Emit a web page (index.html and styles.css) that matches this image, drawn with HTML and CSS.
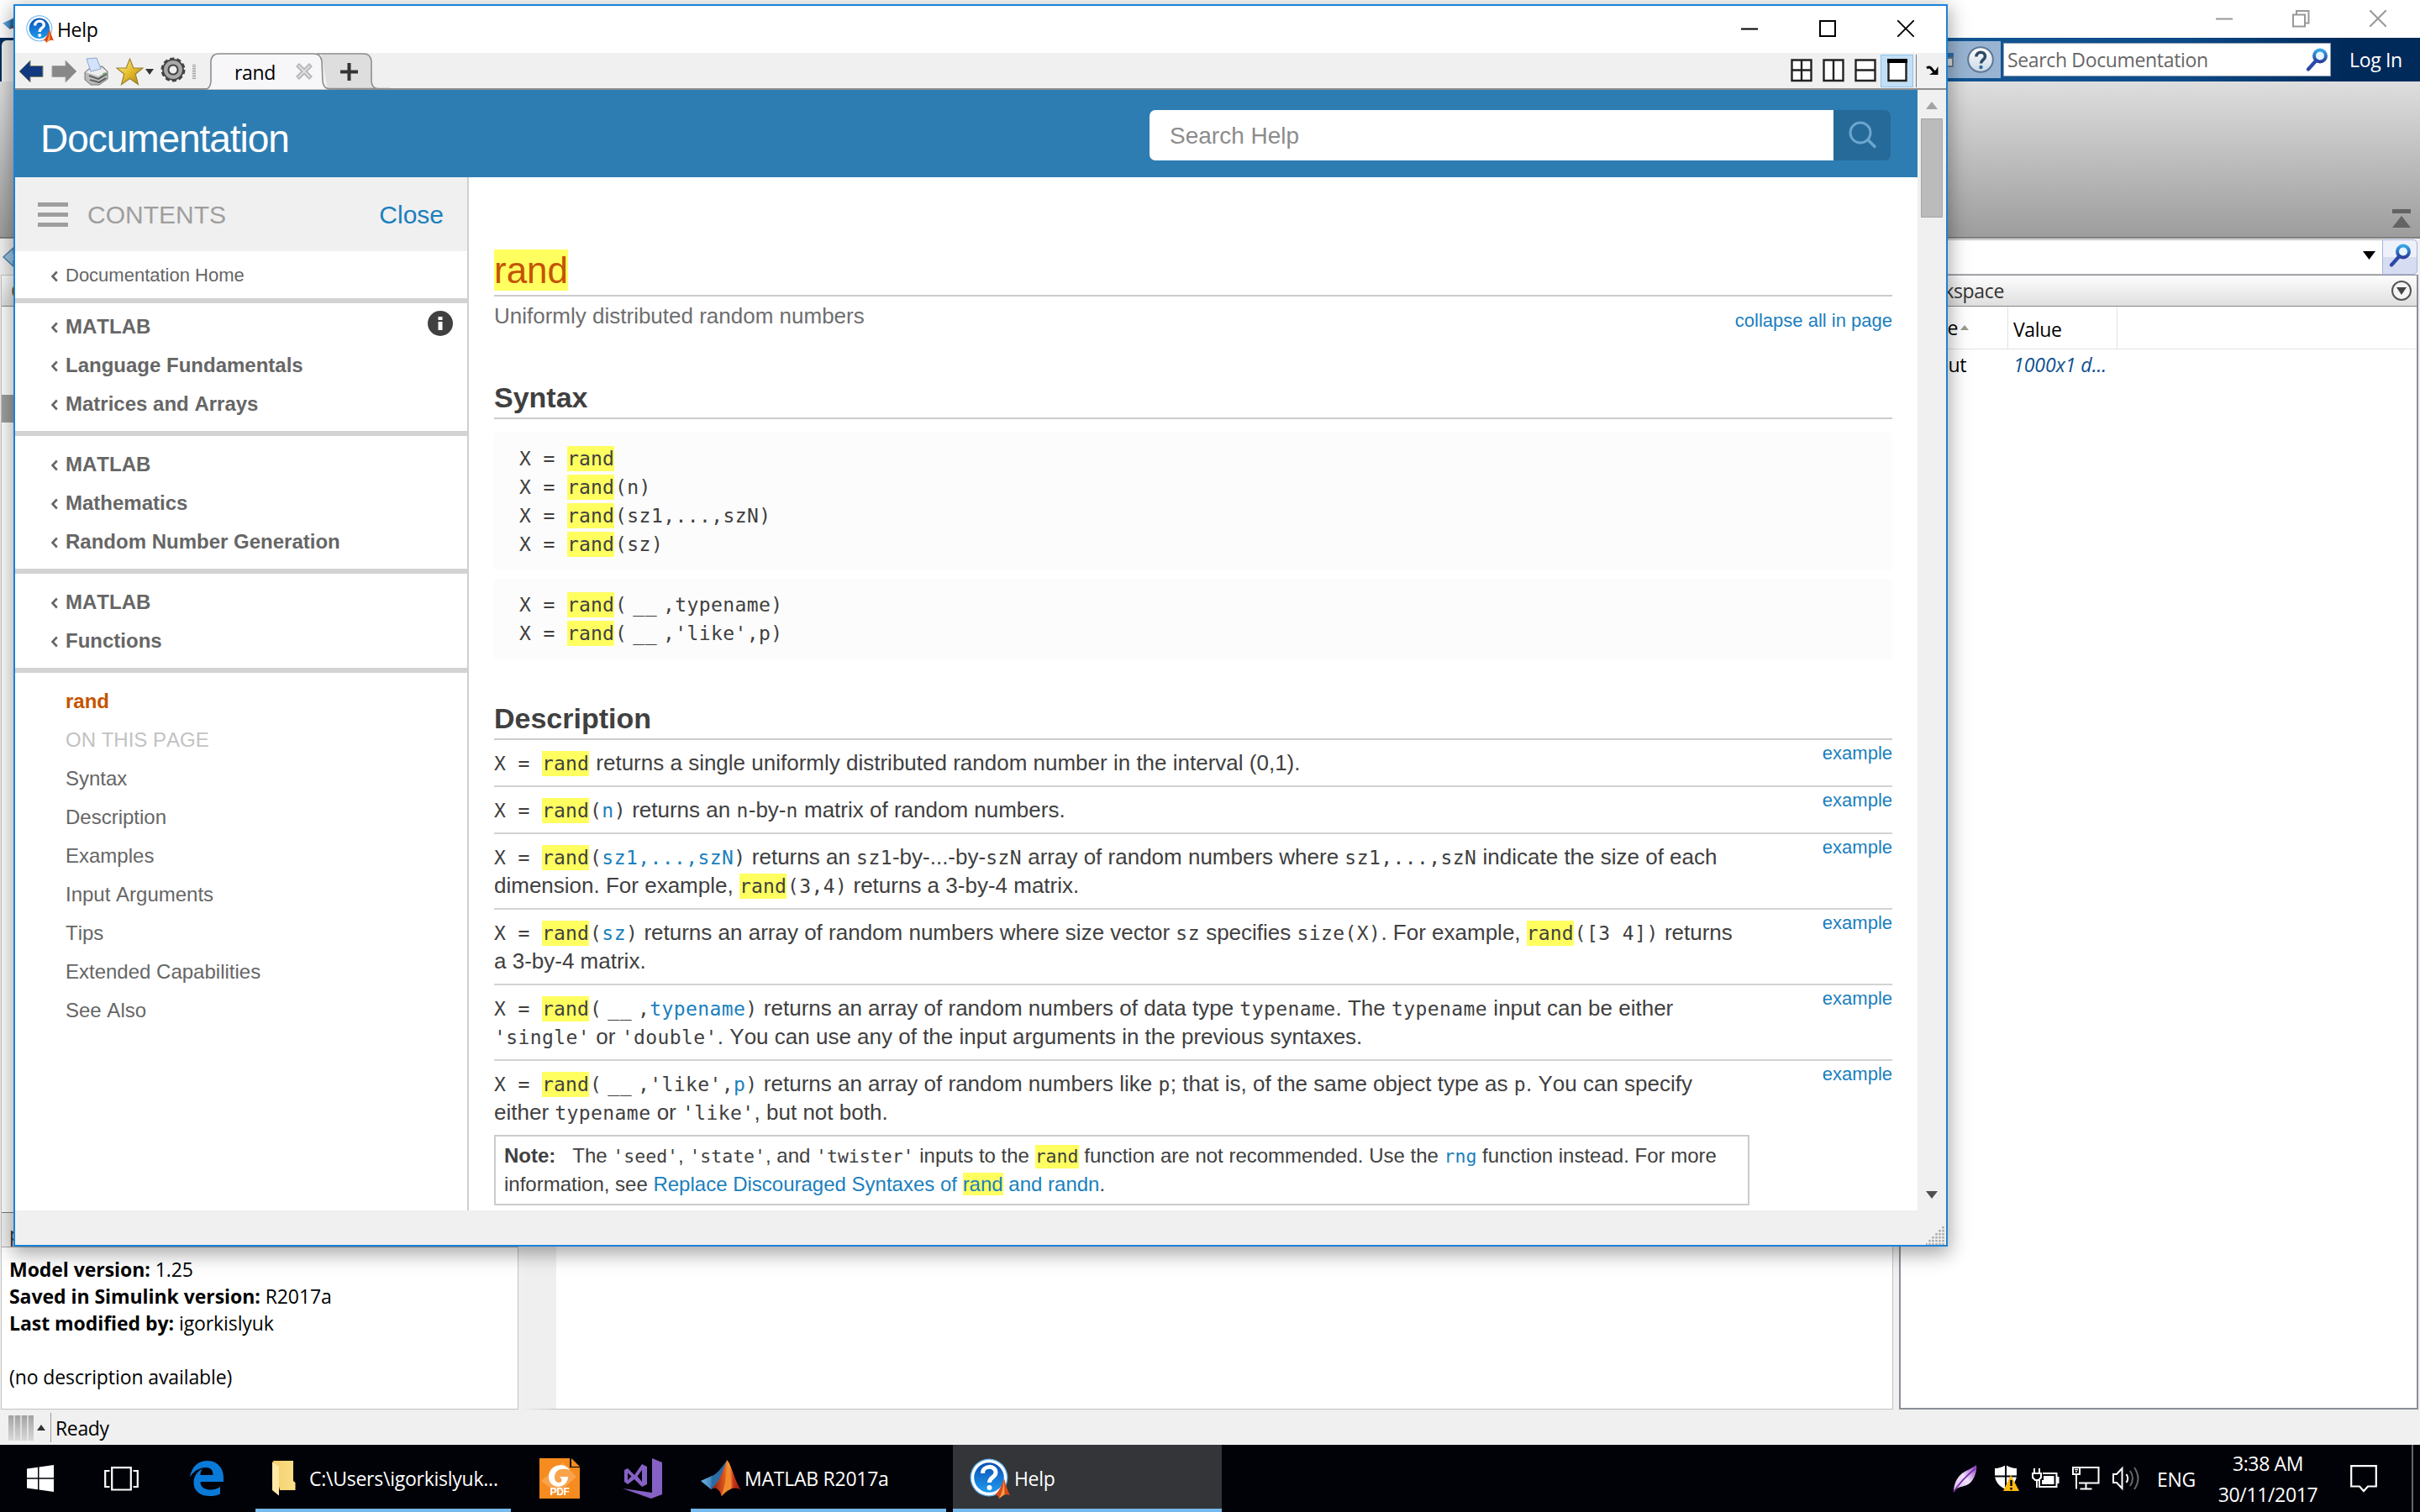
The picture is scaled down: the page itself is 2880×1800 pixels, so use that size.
FILE: index.html
```html
<!DOCTYPE html>
<html lang="en">
<head>
<meta charset="utf-8">
<title>Help</title>
<link rel="stylesheet" href="styles.css">
</head>
<body>
<svg class="defs" aria-hidden="true">
  <defs>
    <linearGradient id="gBlue" x1="0" y1="0" x2="0" y2="1"><stop offset="0" stop-color="#0a50b4"/><stop offset="1" stop-color="#1f9bf0"/></linearGradient>
    <linearGradient id="gPeak" x1="0" y1="0" x2="1" y2="0"><stop offset="0" stop-color="#7a1410"/><stop offset=".45" stop-color="#e2571e"/><stop offset=".6" stop-color="#f9a13a"/><stop offset=".75" stop-color="#c8321a"/><stop offset="1" stop-color="#8f1a12"/></linearGradient>
    <linearGradient id="gWing" x1="0" y1="0" x2="1" y2="0"><stop offset="0" stop-color="#6fb7e8"/><stop offset="1" stop-color="#1f5f98"/></linearGradient>
    <linearGradient id="gGlass" x1="0" y1="0" x2="0" y2="1"><stop offset="0" stop-color="#35a6e6"/><stop offset="1" stop-color="#2a3f9c"/></linearGradient>
    <linearGradient id="gStar" x1="0" y1="0" x2="1" y2="1"><stop offset="0" stop-color="#fff3a0"/><stop offset=".5" stop-color="#e8be2e"/><stop offset="1" stop-color="#a87a10"/></linearGradient>
    <linearGradient id="gFolder" x1="0" y1="0" x2="1" y2="0"><stop offset="0" stop-color="#f5cf6a"/><stop offset="1" stop-color="#fbdf8a"/></linearGradient>
    <linearGradient id="gFeather" x1="0" y1="1" x2="1" y2="0"><stop offset="0" stop-color="#d9b8ee"/><stop offset=".5" stop-color="#f0e2fa"/><stop offset="1" stop-color="#8a35c0"/></linearGradient>
    <linearGradient id="gBall" x1="0" y1="0" x2="0" y2="1"><stop offset="0" stop-color="#fff"/><stop offset="1" stop-color="#c9d8e6"/></linearGradient>
    <symbol id="matlab" viewBox="0 0 48 44">
      <path d="M0 25 L13 19 L22 29 L12 35 Z" fill="url(#gWing)"/>
      <path d="M13 19 C20 17 25 8 31 1 L28 22 L22 31 L12 35 Z" fill="#2b6ca5"/>
      <path d="M31 0 C36 4 40 24 48 36 C40 31 34 34 25 43 C22 35 19 32 12 34 C21 30 27 12 31 0 Z" fill="url(#gPeak)"/>
      <path d="M31 2 C35 12 37 26 36 34 C31 36 28 40 24 43 C30 30 31 16 31 2 Z" fill="#f28b2c"/>
    </symbol>
    <symbol id="helpball" viewBox="0 0 48 48">
      <circle cx="23" cy="23" r="22.5" fill="#5fb0ea"/>
      <circle cx="23" cy="23" r="21.2" fill="#fff"/>
      <circle cx="23" cy="23" r="17.8" fill="url(#gBlue)"/>
      <path d="M15.500 18 C15.500 8 31 8 31 17 C31 23 23.500 22 23.500 29" fill="none" stroke="#fff" stroke-width="5"/>
      <circle cx="23.500" cy="35" r="3" fill="#fff"/>
      <path d="M41 24 C43 32 45 38 48 44 C43 42 39 44 35 48 C34 44 32 44 30 43 C35 40 38 32 41 24 Z" fill="#d8481c"/>
      <path d="M41 25 L41.500 43 L35 48 C39 40 40 34 41 25 Z" fill="#f5a040"/>
    </symbol>
    <symbol id="glass" viewBox="0 0 26 28">
      <circle cx="17" cy="9.500" r="7" fill="#e6f4ff" stroke="url(#gGlass)" stroke-width="4"/>
      <path d="M12 15.500 L3 25.500" stroke="#2c49a8" stroke-width="4.200" stroke-linecap="round"/>
    </symbol>
    <symbol id="caret" viewBox="0 0 10 14"><path d="M7.800 1.500 L2.500 7 L7.800 12.500" fill="none" stroke="currentColor" stroke-width="2.600"/></symbol>
  </defs>
</svg>

<div class="desktop">
  <div class="matlab">
    <div class="m-title">
      <svg class="m-logo" width="34" height="31"><use href="#matlab"/></svg>
      <div class="m-controls">
        <svg width="20" height="20"><path d="M0 10.500H20" stroke="#999" stroke-width="2"/></svg>
        <svg width="21" height="21"><path d="M1 5.500H15V19.500H1Z M5 5V1H19.500V15.500H15.500" fill="none" stroke="#999" stroke-width="2"/></svg>
        <svg width="20" height="20"><path d="M0 0L20 20M20 0L0 20" stroke="#999" stroke-width="2"/></svg>
      </div>
    </div>
    <div class="m-band">
      <div class="m-tabedge"></div>
      <div class="m-quick"><svg width="7" height="17" viewBox="0 0 7 17"><path d="M0 0H7V17H0Z" fill="#6b7c8c"/><path d="M0 0H7V5H0Z" fill="#2f6fae"/><path d="M0 7H5V15H0Z" fill="#ddd"/></svg><svg width="32" height="34" viewBox="0 0 32 34"><circle cx="16" cy="17" r="14.800" fill="url(#gBall)" stroke="#5d7896" stroke-width="2"/><path d="M11 13.500C11 6.500 21.500 6.500 21.500 13C21.500 17.500 16.500 17 16.500 21.500" fill="none" stroke="#2f4a68" stroke-width="3.600"/><circle cx="16.500" cy="26" r="2.200" fill="#2f6a9a"/></svg></div>
      <div class="m-search"><span>Search Documentation</span><svg width="26" height="28"><use href="#glass"/></svg></div>
      <span class="m-login">Log In</span>
    </div>
    <div class="m-ribbon"><svg width="22" height="24"><path d="M0 0H22V5H0ZM11 8L22 22H0Z" fill="#636363"/></svg></div>
    <div class="m-address">
      <svg class="m-back" width="24" height="24"><path d="M1 12L13 1V7H24V17H13V23Z" fill="#9cc4e0" stroke="#4e7fa5" stroke-width="1.500"/></svg>
      <div class="m-path"><svg width="15" height="10"><path d="M0 0H15L7.500 10Z" fill="#000"/></svg></div>
      <div class="m-go"><svg width="26" height="28"><use href="#glass"/></svg></div>
    </div>
    <div class="m-body">
      <div class="m-left">
        <div class="m-head m-cur">C</div>
        <div class="m-files"><div class="m-thumb"></div></div>
        <div class="m-head m-pos">p</div>
        <div class="m-details">
          <div><b>Model version:</b> 1.25</div>
          <div><b>Saved in Simulink version:</b> R2017a</div>
          <div><b>Last modified by:</b> igorkislyuk</div>
          <div>&nbsp;</div>
          <div>(no description available)</div>
        </div>
      </div>
      <div class="m-center"></div>
      <div class="m-right">
        <div class="m-head m-ws"><span>kspace</span><svg width="26" height="26" viewBox="0 0 26 26"><circle cx="13" cy="13" r="11" fill="#f4f4f4" stroke="#555" stroke-width="2"/><path d="M7 9H19L13 18Z" fill="#444"/></svg></div>
        <div class="m-cols"><span class="c1">Name<svg width="10" height="6"><path d="M0 6L5 0L10 6Z" fill="#999a8c"/></svg></span><span class="c2">Value</span><span class="c3"></span></div>
        <div class="m-row"><span class="c1">out</span><span class="c2">1000x1 d...</span></div>
      </div>
    </div>
    <div class="m-status"><div class="m-stripes"></div><svg width="10" height="7"><path d="M0 7L5 0L10 7Z" fill="#333"/></svg><div class="m-sep"></div><span>Ready</span></div>
  </div>

  <div class="help">
    <div class="h-title">
      <svg width="33" height="33"><use href="#helpball"/></svg><span>Help</span>
      <div class="h-controls">
        <svg width="20" height="20"><path d="M0 10.500H20" stroke="#000" stroke-width="2"/></svg>
        <svg width="20" height="20"><path d="M1 1H19V19H1Z" fill="none" stroke="#000" stroke-width="2"/></svg>
        <svg width="20" height="20"><path d="M0 0L20 20M20 0L0 20" stroke="#000" stroke-width="1.800"/></svg>
      </div>
    </div>
    <div class="h-tools">
      <svg class="ic-back" width="31" height="28" viewBox="0 0 31 28"><path d="M1 14L14 1V7.500H29V20.500H14V27Z" fill="#12397f" stroke="#8b8a6a" stroke-width="1"/></svg>
      <svg class="ic-fwd" width="31" height="28" viewBox="0 0 31 28"><path d="M30 14L17 1V7.500H1V20.500H17V27Z" fill="#888" stroke="#a5a5a5" stroke-width="1"/></svg>
      <svg class="ic-print" width="30" height="34" viewBox="0 0 30 34"><path d="M1 18L8 12L22 11L28 17V26L18 33H8L1 27Z" fill="#b9b9b9" stroke="#777"/><path d="M2 18L9 13.500L21 12.500L27 17L17 23Z" fill="#ededed"/><path d="M3 2L15 1L20 14L8 17Z" fill="#d3e2fb" stroke="#8ea6cc"/><path d="M6 22L17 26L27 20M7 27L18 30L26 25" stroke="#555" stroke-width="1.800" fill="none"/><circle cx="24" cy="20" r="1.500" fill="#4eb848"/></svg>
      <svg class="ic-star" width="33" height="33" viewBox="0 0 33 33"><path d="M16.500 1L20.800 12H32L23.200 19.200L26.500 31.500L16.500 24.500L6.500 31.500L9.800 19.200L1 12H12.200Z" fill="url(#gStar)" stroke="#9a8433" stroke-width="1.200"/></svg>
      <svg class="ic-drop" width="10" height="7"><path d="M0 0H10L5 7Z" fill="#333"/></svg>
      <svg class="ic-gear" width="30" height="30" viewBox="0 0 30 30"><circle cx="15" cy="15" r="12.500" fill="none" stroke="#444" stroke-width="4" stroke-dasharray="4.900 2.950"/><circle cx="15" cy="15" r="8.700" fill="none" stroke="#444" stroke-width="8.400"/><circle cx="15" cy="15" r="8.800" fill="none" stroke="#a9a9a9" stroke-width="4.400"/></svg>
      <div class="ic-grip"></div>
      <div class="tabs">
        <svg class="tabshape" width="220" height="44" viewBox="0 0 220 44"><path d="M138 1H189Q196 1 197 10L198 34Q199 43 206 43H146Z" fill="#dedede"/><path d="M0 43.500Q6 43 7 34V10Q8 1 16 1H129Q138 1 139 10L140 34Q141 43.500 148 43.500Z" fill="#f7f7fa"/><path d="M0 43.500Q6 43 7 34V10Q8 1 16 1H129Q138 1 139 10L140 34Q141 42.500 148 42.500H220M133 1H189Q197 1 198 10V34Q199 42.500 206 42.500" fill="none" stroke="#8e8e8e" stroke-width="1.600"/></svg>
        <span class="tabname">rand</span>
        <svg class="tabx" width="20" height="20"><path d="M2 2L18 18M18 2L2 18" stroke="#b5b5b5" stroke-width="5.500"/><path d="M3 3L17 17M17 3L3 17" stroke="#dedede" stroke-width="2"/></svg>
        <svg class="plus" width="21" height="21"><path d="M10.500 0V21M0 10.500H21" stroke="#333" stroke-width="4"/></svg>
      </div>
      <div class="layouts">
        <svg width="26" height="28"><path d="M1.500 1.500H24.500V26H1.500ZM13 2V26M2 13.500H24" fill="#fff" stroke="#222" stroke-width="2.400"/></svg>
        <svg width="26" height="28"><path d="M1.500 1.500H24.500V26H1.500ZM13 2V26" fill="#fff" stroke="#222" stroke-width="2.400"/></svg>
        <svg width="26" height="28"><path d="M1.500 1.500H24.500V26H1.500ZM2 13.500H24" fill="#fff" stroke="#222" stroke-width="2.400"/></svg>
        <div class="sel"><svg width="24" height="28"><path d="M1.500 1.500H22.500V26H1.500Z" fill="#fff" stroke="#222" stroke-width="2.400"/><path d="M0 0H24V5H0Z" fill="#000"/></svg></div>
        <div class="vline"></div>
        <svg class="dock" width="15" height="12"><path d="M1 3Q4 1 6 3L10 8" stroke="#000" stroke-width="3" fill="none"/><path d="M14.500 1V11H4L7 9L12 5Z" fill="#000"/></svg>
      </div>
    </div>

    <div class="h-body">
      <div class="page">
        <div class="dochead">
          <h1>Documentation</h1>
          <div class="searchbox"><span>Search Help</span></div>
          <div class="searchbtn"><svg width="34" height="34" viewBox="0 0 34 34"><circle cx="14" cy="14" r="12" fill="none" stroke="#6ba6cf" stroke-width="3"/><path d="M23 22.500L32 31.500" stroke="#6ba6cf" stroke-width="3.500"/></svg></div>
        </div>
        <div class="cols">
          <nav class="side">
            <div class="contents"><div class="burger"></div><span>CONTENTS</span><a>Close</a></div>
            <div class="sec home"><div class="crumb"><svg width="10" height="14"><use href="#caret"/></svg>Documentation Home</div></div>
            <div class="sec first">
              <svg class="info" width="30" height="30"><circle cx="15" cy="15" r="15" fill="#404040"/><path d="M12.500 7H17.500V11H12.500ZM12.500 13H17.500V23H12.500Z" fill="#fff"/></svg>
              <div class="crumb"><svg width="10" height="14"><use href="#caret"/></svg>MATLAB</div>
              <div class="crumb"><svg width="10" height="14"><use href="#caret"/></svg>Language Fundamentals</div>
              <div class="crumb"><svg width="10" height="14"><use href="#caret"/></svg>Matrices and Arrays</div>
            </div>
            <div class="sec">
              <div class="crumb"><svg width="10" height="14"><use href="#caret"/></svg>MATLAB</div>
              <div class="crumb"><svg width="10" height="14"><use href="#caret"/></svg>Mathematics</div>
              <div class="crumb"><svg width="10" height="14"><use href="#caret"/></svg>Random Number Generation</div>
            </div>
            <div class="sec">
              <div class="crumb"><svg width="10" height="14"><use href="#caret"/></svg>MATLAB</div>
              <div class="crumb"><svg width="10" height="14"><use href="#caret"/></svg>Functions</div>
            </div>
            <div class="toc">
              <div class="cur">rand</div>
              <div class="lbl">ON THIS PAGE</div>
              <div>Syntax</div><div>Description</div><div>Examples</div><div>Input Arguments</div><div>Tips</div><div>Extended Capabilities</div><div>See Also</div>
            </div>
          </nav>
          <main class="main">
            <h2 class="fn"><mark>rand</mark></h2>
            <div class="purpose"><span>Uniformly distributed random numbers</span><a>collapse all in page</a></div>
            <h3>Syntax</h3>
            <div class="code">
              <div>X = <mark>rand</mark></div>
              <div>X = <mark>rand</mark>(n)</div>
              <div>X = <mark>rand</mark>(sz1,...,szN)</div>
              <div>X = <mark>rand</mark>(sz)</div>
            </div>
            <div class="code two">
              <div>X = <mark>rand</mark>(<i>__</i>,typename)</div>
              <div>X = <mark>rand</mark>(<i>__</i>,'like',p)</div>
            </div>
            <h3 class="desc">Description</h3>
            <div class="item"><p><code>X = <mark>rand</mark></code> returns a single uniformly distributed random number in the interval (0,1).</p><a>example</a></div>
            <div class="item"><p><code>X = <mark>rand</mark>(<b>n</b>)</code> returns an <code>n</code>-by-<code>n</code> matrix of random numbers.</p><a>example</a></div>
            <div class="item"><p><code>X = <mark>rand</mark>(<b>sz1,...,szN</b>)</code> returns an <code>sz1</code>-by-...-by-<code>szN</code> array of random numbers where <code>sz1,...,szN</code> indicate the size of each<br>dimension. For example, <code><mark>rand</mark>(3,4)</code> returns a 3-by-4 matrix.</p><a>example</a></div>
            <div class="item"><p><code>X = <mark>rand</mark>(<b>sz</b>)</code> returns an array of random numbers where size vector <code>sz</code> specifies <code>size(X)</code>. For example, <code><mark>rand</mark>([3 4])</code> returns<br>a 3-by-4 matrix.</p><a>example</a></div>
            <div class="item"><p><code>X = <mark>rand</mark>(<i>__</i>,<b>typename</b>)</code> returns an array of random numbers of data type <code>typename</code>. The <code>typename</code> input can be either<br><code>'single'</code> or <code>'double'</code>. You can use any of the input arguments in the previous syntaxes.</p><a>example</a></div>
            <div class="item last"><p><code>X = <mark>rand</mark>(<i>__</i>,'like',<b>p</b>)</code> returns an array of random numbers like <code>p</code>; that is, of the same object type as <code>p</code>. You can specify<br>either <code>typename</code> or <code>'like'</code>, but not both.</p><a>example</a></div>
            <div class="note"><strong>Note:</strong>The <code>'seed'</code>, <code>'state'</code>, and <code>'twister'</code> inputs to the <code><mark>rand</mark></code> function are not recommended. Use the <code><b>rng</b></code> function instead. For more<br>information, see <a>Replace Discouraged Syntaxes of <mark>rand</mark> and randn</a>.</div>
          </main>
        </div>
      </div>
      <div class="scroll">
        <svg width="14" height="9"><path d="M0 9L7 0L14 9Z" fill="#a3a3a3"/></svg>
        <div class="thumb"></div>
        <svg class="down" width="14" height="9"><path d="M0 0H14L7 9Z" fill="#505050"/></svg>
      </div>
    </div>
    <div class="h-foot"><svg width="24" height="24" viewBox="0 0 24 24"><path d="M20.500 2v22M16.500 6v18M12.500 10v14M8.500 14v10M4.500 18v6M.5 22v2" stroke="#aaa" stroke-width="2.400" stroke-dasharray="2.400 1.600"/></svg></div>
  </div>

  <div class="taskbar">
    <div class="tb start"><svg width="32" height="32" viewBox="0 0 32 32"><path d="M0 4.500L13 2.800V15.300H0ZM14.500 2.500L32 0V15.300H14.500ZM0 16.700H13V29.200L0 27.500ZM14.500 16.700H32V32L14.500 29.500Z" fill="#fff"/></svg></div>
    <div class="tb view"><svg width="41" height="29" viewBox="0 0 41 29"><path d="M9.200 1.200H31.800V27.500H9.200ZM6.500 5H1.200V24H6.500M34.500 5H39.800V24H34.500" fill="none" stroke="#fff" stroke-width="2.200"/></svg></div>
    <div class="tb edge"><svg width="40" height="42" viewBox="0 0 40 42"><path d="M0 19.500C2 7 10 0 21 0C33 0 40 9 40 20V25H12.500C12.500 32 18 34.500 25 34.500C29.500 34.500 33 33 36 31V39.500C32 41.500 28 42 23.500 42C11 42 4.500 35 4.500 26C4.500 18 9 12.500 15 9.500C13 12 12.500 14.500 12.300 17H27.500C27.500 11 24.500 8 19 8C11 8 4 13 0 19.500Z" fill="#0a7ad8"/></svg></div>
    <div class="tb folder"><svg width="28" height="42" viewBox="0 0 28 42"><path d="M1 0H25V24L27.500 26V35H9Z" fill="url(#gFolder)"/><path d="M0 1L8 7V41.500L0 35Z" fill="#ffe9a6"/></svg><span>C:\Users\igorkislyuk...</span></div>
    <div class="tb pdf"><svg width="48" height="48" viewBox="0 0 48 48"><path d="M0 0H36V11H48V48H0Z" fill="#f68b1f"/><path d="M38 0L48 10H38Z" fill="#f68b1f"/><path d="M2 27L28 5L44 22L22 42Z" fill="#f9a34c"/><path d="M36 14C30 4 11 7 11 22C11 38 34 37 34 22H24C27 24 28 29 23 29C16 29 16 14 26 13C30 12.500 33 13 36 14Z" fill="#fff"/><text x="24" y="44" text-anchor="middle" class="pdftext">PDF</text></svg></div>
    <div class="tb vs"><svg width="47" height="48" viewBox="0 0 47 48"><path d="M35 0L47 5V43L34 48L0 36L35 41Z" fill="#8661c5"/><path d="M2 14L6 12L14 20L23 7L29 10V31L23 34L14 25L6 31L2 28ZM6 17.500V26L10.500 21.500ZM23 14L17.500 21.500L23 28Z" fill="#8661c5" fill-rule="evenodd"/></svg></div>
    <div class="tb mat"><svg width="48" height="46"><use href="#matlab"/></svg><span>MATLAB R2017a</span></div>
    <div class="tb hlp"><svg width="48" height="48"><use href="#helpball"/></svg><span>Help</span></div>
    <div class="tray">
      <svg class="y1" width="30" height="34" viewBox="0 0 30 34"><path d="M1 31C2 22 5 16 11 11C16 7 22 6 28 1C29 8 26 17 21 22C16 27 10 26 5 29Z" fill="url(#gFeather)"/><path d="M1 33C8 22 16 14 27 5" stroke="#7a2fb0" stroke-width="1.800" fill="none"/></svg>
      <svg class="y2" width="31" height="32" viewBox="0 0 31 32"><path d="M1 4C6 4 11 2 14 0C17 2 22 4 27 4V12C27 20 21 26 14 29C7 26 1 20 1 12Z" fill="#fff"/><path d="M14 0V29M0 13.500H28" stroke="#000208" stroke-width="2"/><path d="M20 12L30 31H11Z" fill="#fdb913"/><path d="M20.500 18V25M20.500 27V29.500" stroke="#000" stroke-width="2.400"/></svg>
      <svg class="y3" width="33" height="24" viewBox="0 0 33 24"><path d="M3 0V6M9 0V6M1 6H11V11L8 14H4L1 11ZM6 14V23" stroke="#fff" stroke-width="2" fill="none"/><path d="M13 6H29.500V22H9V14" fill="none" stroke="#fff" stroke-width="2"/><path d="M14 9H26.500V19H12V14H14ZM30 10H32.500V18H30Z" fill="#fff"/></svg>
      <svg class="y4" width="33" height="28" viewBox="0 0 33 28"><path d="M9 1H31.500V19.500H8M1 1H9V9H1ZM5 9V26.500M16.500 20V26M9.500 26.500H23.500" stroke="#fff" stroke-width="2" fill="none"/><path d="M3 3.500h4M5 5v2" stroke="#fff" stroke-width="1.500"/></svg>
      <svg class="y5" width="33" height="30" viewBox="0 0 33 30"><path d="M1 10H5L11.500 3V27L5 20H1Z" fill="none" stroke="#fff" stroke-width="2"/><path d="M16.500 10Q20 15 16.500 20" fill="none" stroke="#fff" stroke-width="2"/><path d="M21 6Q27 15 21 24M26 2Q35 15 26 28" fill="none" stroke="#666" stroke-width="2"/></svg>
      <span class="eng">ENG</span>
      <div class="clock"><div>3:38 AM</div><div>30/11/2017</div></div>
      <svg class="note-ic" width="32" height="33" viewBox="0 0 32 33"><path d="M1.200 1.200H30.800V25.500H21L16 31L11 25.500H1.200Z" fill="none" stroke="#fff" stroke-width="2.200"/></svg>
      <div class="peek"></div>
    </div>
  </div>
</div>
</body>
</html>
```
FILE: styles.css
```css
* { box-sizing: border-box; }
body { margin: 0; background: #f0f0f0; }
svg { display: block; flex: none; }
.defs { position: absolute; width: 0; height: 0; }
h1, h2, h3, p { margin: 0; font-weight: normal; }
.desktop { position: relative; width: 2880px; height: 1800px; overflow: hidden; display: flex; flex-direction: column;
  font-family: "Open Sans", "Noto Sans", sans-serif; font-size: 23px; letter-spacing: -0.35px; white-space: nowrap; font-kerning: none; color: #000; }

/* Main MATLAB window behind */
.matlab { height: 1720px; display: flex; flex-direction: column; background: #f0f0f0; }
.m-title { height: 45px; flex: none; background: #fff; display: flex; justify-content: space-between; padding: 10px 40px 0 3px; }
.m-controls { display: flex; gap: 71px; align-items: center; height: 24px; }
.m-band { height: 52px; flex: none; display: flex; align-items: center; background: linear-gradient(90deg, #00305e 0, #00305e 2200px, #135695 2320px, #0c4a88 2600px, #002a5a 2790px); }
.m-tabedge { width: 2316px; margin-left: 2px; height: 49px; margin-top: 3px; background: #ececec; border-radius: 6px 0 0 0; flex: none; }
.m-quick { width: 63px; height: 44px; margin-right: 3px; background: #98b4d2; display: flex; align-items: center; justify-content: space-between; padding-right: 8px; }
.m-search { width: 390px; height: 40px; background: #fff; border: 1px solid #8e9bab; display: flex; align-items: center; justify-content: space-between; padding: 0 3px 0 4px; color: #666; line-height: 40px; }
.m-login { color: #fff; margin-left: 22px; }
.m-ribbon { height: 187px; flex: none; background: linear-gradient(#dedede, #9d9d9d); border-bottom: 2px solid #808080; display: flex; justify-content: flex-end; align-items: flex-end; padding: 0 11px 9px 0; }
.m-address { height: 43px; flex: none; display: flex; align-items: center; background: #f0f0f0; }
.m-back { margin: 0 0 0 3px; }
.m-path { flex: 1; height: 42px; margin-left: 10px; background: #fff; border: 1px solid #b5b5b5; border-right: 0; display: flex; justify-content: flex-end; align-items: center; padding: 0 8px 3px 0; }
.m-go { width: 42px; height: 42px; margin-right: 3px; border: 1px solid #a9b3d8; border-radius: 0 5px 5px 0; background: linear-gradient(#eef0fa 50%, #d6dcf2 50%); display: flex; align-items: center; justify-content: center; padding-bottom: 3px; }
.m-body { flex: 1; min-height: 0; display: flex; padding: 0 2px 0 1px; }
.m-left { width: 616px; display: flex; flex-direction: column; border: 1px solid #c3c3c3; background: #fff; }
.m-head { height: 37px; flex: none; border-bottom: 1px solid #888; background: linear-gradient(#fdfdfd, #dfdfdf); line-height: 36px; color: #333; }
.m-cur { padding-left: 11px; color: #7a4410; }
.m-files { flex: 1; padding-top: 105px; }
.m-thumb { width: 20px; height: 33px; background: #9f9f9f; }
.m-pos { height: 42px; border-top: 1px solid #777; border-bottom: 1px solid #aaa; padding-left: 9px; background: #f0f0f0; line-height: 50px; }
.m-details { height: 192px; flex: none; padding: 10px 0 0 9px; line-height: 32px; letter-spacing: -0.1px; }
.m-details b { font-weight: 700; letter-spacing: -0.05px; }
.m-center { width: 1630px; margin-left: 6px; background: #fff; border: 1px solid #c3c3c3; border-left: 39px solid #efefef; }
.m-right { flex: 1; margin-left: 7px; border: 1px solid #8a8f98; border-width: 1px 2px 2px; background: #fff; }
.m-ws { display: flex; justify-content: space-between; align-items: center; padding: 0 5px 0 8px; }
.m-ws span { width: 115px; display: flex; justify-content: flex-end; }
.m-cols { height: 51px; display: flex; border-bottom: 1px solid #e2e2e2; line-height: 54px; }
.c1 { width: 128px; display: flex; justify-content: flex-end; align-items: center; border-right: 1px solid #e2e2e2; }
.m-cols .c1 svg { margin-left: 3px; }
.c2 { width: 130px; padding-left: 6px; border-right: 1px solid #e2e2e2; }
.m-row { display: flex; line-height: 36px; }
.m-row .c1, .m-row .c2 { border: 0; }
.m-cols .c1 { padding-right: 46px; }
.m-row .c1 { padding-right: 50px; }
.m-row .c2 { font-style: italic; color: #0d4f8f; letter-spacing: 0; }
.m-status { height: 42px; flex: none; display: flex; align-items: center; padding-left: 10px; border-top: 1px solid #ededed; }
.m-status span { padding-top: 1px; }
.m-stripes { width: 30px; height: 30px; margin-right: 4px; background: linear-gradient(rgba(240,240,240,0), rgba(240,240,240,.7)), repeating-linear-gradient(90deg, #a2a2a2 0 6px, #d6d6d6 6px 8px); }
.m-sep { width: 1px; height: 35px; background: #999; margin: 0 5px 0 6px; }

/* Help window */
.help { position: absolute; left: 16px; top: 5px; width: 2302px; height: 1479px; border: 2px solid #1a82d8; background: #f0f0f0; box-shadow: 0 6px 22px 2px rgba(0,0,0,.36); display: flex; flex-direction: column; }
.h-title { height: 56px; flex: none; background: #fff; display: flex; align-items: center; padding: 0 38px 0 13px; }
.h-title > svg { margin-top: -2px; }
.h-title span { margin-left: 4px; }
.h-controls { margin-left: auto; display: flex; gap: 73px; margin-top: -2px; }
.h-tools { height: 44px; flex: none; display: flex; align-items: center; padding-left: 4px; background: linear-gradient(#f0f0f0 42px, #8e8e8e 42px); }
.ic-fwd { margin-left: 8px; }
.ic-print { margin-left: 8px; }
.ic-star { margin-left: 8px; }
.ic-drop { margin-left: 2px; }
.ic-gear { margin-left: 8px; margin-top: -4px; }
.ic-grip { width: 4px; height: 17px; margin-left: 8px; background: repeating-linear-gradient(#999 0 1px, transparent 1px 2px); }
.tabs { position: relative; width: 220px; height: 44px; margin-left: 11px; display: flex; align-items: center; }
.tabshape { position: absolute; left: 0; top: 0; }
.tabname, .tabx, .plus { position: relative; }
.tabname { margin-left: 35px; width: 73px; padding-top: 1px; }
.plus { margin-left: 33px; }
.layouts { margin-left: auto; display: flex; align-items: center; height: 40px; gap: 12px; margin-top: -2px; padding-right: 9px; }
.sel { width: 39px; height: 39px; margin-left: -7px; display: flex; align-items: center; justify-content: center; background: #c2dff5; border: 1px solid #8cc4f0; }
.vline { width: 1px; height: 39px; margin-left: -9px; background: #777; }
.dock { margin-left: -1px; }
.h-body { height: 1334px; flex: none; display: flex; font-family: "Liberation Sans", Arial, sans-serif; letter-spacing: 0; }
.page { width: 2264px; display: flex; flex-direction: column; overflow: hidden; background: #fff; }
.dochead { height: 104px; flex: none; display: flex; align-items: center; background: #2e7db2; padding: 4px 32px 0 30px; color: #fff; }
.dochead h1 { font-size: 46px; letter-spacing: -1.05px; margin-right: auto; padding-top: 8px; }
.searchbox { width: 814px; height: 60px; background: #fff; border-radius: 7px 0 0 7px; padding-left: 24px; font-size: 28px; line-height: 62px; color: #8c8c8c; }
.searchbtn { width: 68px; height: 60px; background: #266a99; border-radius: 0 7px 7px 0; display: flex; align-items: center; justify-content: center; padding-left: 2px; }
.cols { flex: 1; display: flex; }
.side { width: 540px; border-right: 2px solid #d0d0d0; color: #666; font-size: 24px; }
.contents { height: 88px; background: #f0f0f0; display: flex; align-items: center; padding: 1px 28px 0 27px; font-size: 30px; color: #9e9e9e; }
.burger { width: 36px; height: 29px; background: repeating-linear-gradient(#9e9e9e 0 5px, transparent 5px 12px); margin-right: 23px; }
.contents a { margin-left: auto; color: #1a7fbe; }
.sec { position: relative; border-bottom: 6px solid #d3d3d3; padding: 11px 0 9px 42px; font-weight: bold; }
.home { padding: 5px 0 5px 42px; font-weight: normal; font-size: 22px; }
.home .crumb { padding-top: 1px; }
.first { padding-top: 5px; }
.crumb { display: flex; align-items: center; height: 46px; gap: 8px; }
.crumb svg { margin-top: 2px; }
.info { position: absolute; right: 17px; top: 9px; }
.toc { padding: 11px 0 0 60px; line-height: 46px; }
.toc .cur { font-weight: bold; color: #c45400; }
.toc .lbl { color: #c2c2c2; }
.main { flex: 1; padding: 86px 30px 0; color: #404040; font-size: 26px; }
mark { background: #ffff60; color: inherit; }
.fn { height: 56px; border-bottom: 2px solid #ccc; font-size: 44px; line-height: 50px; color: #c45400; }
.purpose { display: flex; justify-content: space-between; height: 45px; line-height: 34px; padding-top: 6px; color: #6e6e6e; }
.purpose a { font-size: 22px; padding-top: 6px; }
.main a, .main code b, .note b { color: #1a7fbe; font-weight: normal; }
h3 { font-size: 34px; font-weight: bold; line-height: 40px; border-bottom: 2px solid #ccc; margin-top: 55px; height: 46px; margin-bottom: 16px; }
.main .desc { margin: 50px 0 0; }
code, .code { font-family: "DejaVu Sans Mono", "Liberation Mono", monospace; font-size: 23px; letter-spacing: .42px; }
code { line-height: 1; }
.code { background: #fcfcfc; padding: 14px 30px; line-height: 34px; }
.code mark, code mark { display: inline-block; height: 30px; line-height: 30px; width: 56px; letter-spacing: .15px; margin-right: 1px; }
.code.two { margin-top: 10px; }
.code i, code i { font-style: normal; margin: 0 7px; }
.item { display: flex; justify-content: space-between; padding: 10px 0; border-bottom: 2px solid #d3d3d3; line-height: 34px; }
.item a { font-size: 22px; line-height: 24px; margin-top: -6px; height: 24px; }
.item.last { border: 0; }
.note { width: 1494px; height: 84px; border: 2px solid #ccc; padding: 6px 10px; font-size: 24px; line-height: 34px; }
.note strong { margin-right: 20px; }
.note code { font-size: 21.500px; letter-spacing: 0; }
.note code mark { width: 52px; height: 28px; line-height: 28px; letter-spacing: 0; margin-right: 0; }
.scroll { flex: 1; display: flex; flex-direction: column; align-items: center; padding: 14px 0; background: #f0f0f0; }
.thumb { width: 26px; height: 118px; margin-top: 11px; background: #bbb; border: 1px solid #a5a5a5; }
.down { margin-top: auto; }
.h-foot { flex: 1; display: flex; align-items: flex-end; justify-content: flex-end; }

/* Taskbar */
.taskbar { height: 80px; background: #000208; display: flex; color: #fff; }
.tb { display: flex; align-items: center; height: 80px; }
.start { width: 96px; padding-left: 32px; }
.view { width: 96px; padding-left: 28px; }
.edge { width: 112px; padding-left: 34px; }
.folder { width: 304px; padding: 4px 0 0 20px; border-bottom: 4px solid #76b9ed; }
.folder span { margin-left: 16px; letter-spacing: -0.25px; }
.pdf { width: 96px; padding-left: 34px; }
.pdftext { font: bold 12px "Liberation Sans", sans-serif; fill: #fff; }
.vs { width: 118px; padding-left: 37px; }
.mat { width: 304px; padding: 4px 0 0 12px; border-bottom: 4px solid #76b9ed; }
.mat span { margin-left: 4px; letter-spacing: -0.25px; }
.hlp { width: 320px; margin-left: 8px; padding: 4px 0 0 20px; border-bottom: 4px solid #76b9ed; background: #333539; }
.hlp span { margin-left: 5px; }
.tray { margin-left: auto; width: 556px; display: flex; align-items: center; }
.y2 { margin-left: 19px; }
.y3 { margin-left: 14px; }
.y4 { margin-left: 15px; }
.y5 { margin-left: 15px; }
.eng { margin-left: 20px; width: 66px; padding-top: 2px; }
.clock { width: 132px; text-align: center; line-height: 37px; padding-top: 2px; }
.note-ic { margin-left: 32px; }
.peek { width: 2px; height: 80px; margin-left: auto; margin-right: 8px; background: #666; }
```
